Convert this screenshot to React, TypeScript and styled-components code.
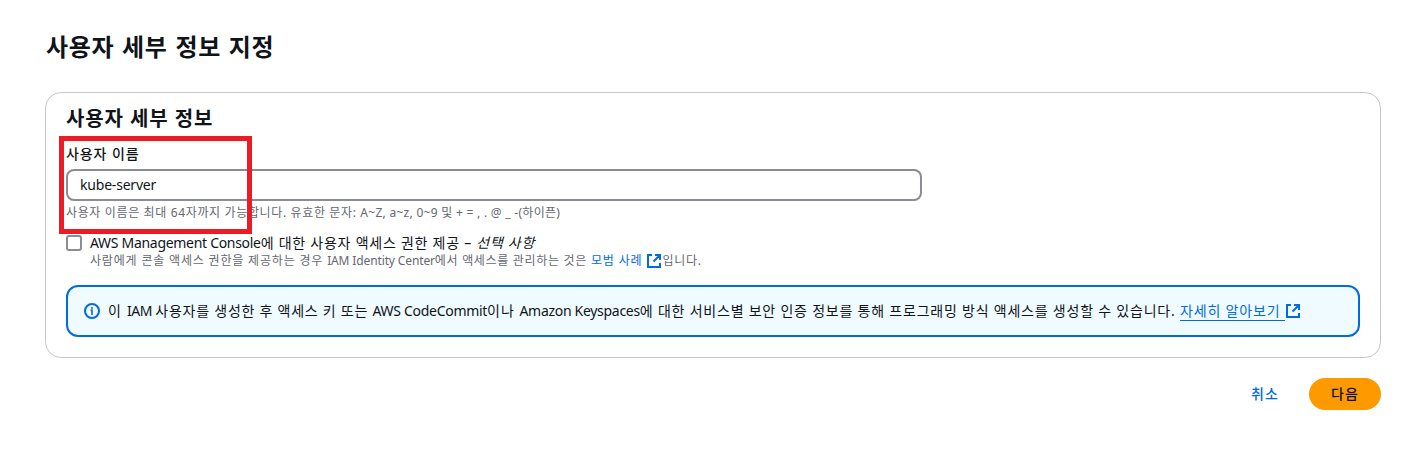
import React from "react";
import styled, { createGlobalStyle } from "styled-components";

const GlobalStyle = createGlobalStyle`
  *, *::before, *::after { box-sizing: border-box; }
  body {
    margin: 0;
    background: #fff;
    color: #0f141a;
    font-family: "Noto Sans", "Noto Sans CJK KR", sans-serif;
    font-size: 14px;
    line-height: 20px;
  }
`;

const Page = styled.main`
  width: 1410px;
  height: 470px;
  padding: 31px 29px 0 45px;
  overflow: hidden;
`;

const Title = styled.h1`
  margin: 0 0 29px 1px;
  font-size: 24px;
  line-height: 32px;
  font-weight: 700;
  white-space: nowrap;
  letter-spacing: 0.7px;
  word-spacing: 0.8px;
`;

const Card = styled.section`
  height: 266px;
  padding: 14px 20px 0;
  border: 1px solid #c6c6cd;
  border-radius: 16px;
`;

const CardTitle = styled.h2`
  margin: 0 0 13px;
  font-size: 20px;
  line-height: 24px;
  font-weight: 700;
  white-space: nowrap;
  letter-spacing: 0.9px;
`;

const Field = styled.div`
  position: relative;
  display: flex;
  flex-direction: column;
  width: 856px;
`;

const Label = styled.label`
  height: 20px;
  margin: 0 0 5px;
  font-weight: 500;
  letter-spacing: 0.9px;
`;

const TextInput = styled.input`
  height: 32px;
  padding: 0 12px 2px;
  border: 2px solid #8c8c94;
  border-radius: 8px;
  background: #fff;
  color: #0f141a;
  font: inherit;
  letter-spacing: -0.2px;
  outline: none;
`;

const Hint = styled.div`
  height: 16px;
  margin: 4px 0 0;
  color: #656871;
  font-size: 12px;
  line-height: 16px;
  white-space: nowrap;
`;

const Highlight = styled.div`
  position: absolute;
  left: -7px;
  top: -8px;
  width: 193px;
  height: 98px;
  border: 5px solid #ed1c24;
  pointer-events: none;
`;

const CheckRow = styled.div`
  display: flex;
  gap: 8px;
  margin-top: 12px;
`;

const Checkbox = styled.input`
  appearance: none;
  flex: none;
  width: 16px;
  height: 16px;
  margin: 2px 0 0;
  border: 2px solid #8c8c94;
  border-radius: 3px;
  background: #fff;
`;

const CheckText = styled.div`
  white-space: nowrap;
`;

const CheckDescription = styled.div`
  display: flex;
  color: #656871;
  font-size: 12px;
  line-height: 16px;
  white-space: pre;
`;

const Run = styled.span<{ $ls?: number; $ws?: number }>`
  letter-spacing: ${(p) => p.$ls ?? 0}px;
  word-spacing: ${(p) => p.$ws ?? 0}px;
`;

const Link = styled.a<{ $underlined?: boolean }>`
  color: #006ce0;
  white-space: pre;
  letter-spacing: 0.85px;
  text-decoration: none;
  border-bottom: ${(p) => (p.$underlined ? "1px solid #006ce0" : "0")};
`;

const InfoBox = styled.div`
  display: flex;
  align-items: center;
  height: 52px;
  margin-top: 16px;
  padding: 0 16px;
  border: 2px solid #006ce0;
  border-radius: 12px;
  background: #f0fbff;
`;

const InfoText = styled.div`
  display: flex;
  height: 20px;
  margin-left: 8px;
  white-space: pre;
`;

const Actions = styled.div`
  display: flex;
  justify-content: flex-end;
  gap: 8px;
  margin-top: 20px;
`;

const Button = styled.button<{ $primary?: boolean }>`
  height: 32px;
  padding: 0 22px 1px;
  border: 0;
  border-radius: 20px;
  background: ${(p) => (p.$primary ? "#ff9900" : "transparent")};
  color: ${(p) => (p.$primary ? "#0f141a" : "#006ce0")};
  font: inherit;
  font-weight: 500;
  letter-spacing: 1.1px;
`;

const Icon = styled.svg<{ $top?: number; $left?: number }>`
  flex: none;
  display: block;
  width: 16px;
  height: 16px;
  margin-top: ${(p) => p.$top ?? 0}px;
  margin-left: ${(p) => p.$left ?? 0}px;
  fill: none;
  stroke: #006ce0;
  stroke-width: 2;
`;

const ExternalIcon = ({ top, left }: { top?: number; left?: number }) => (
  <Icon viewBox="0 0 16 16" $top={top} $left={left} aria-hidden>
    <path d="M6 2H2v12h12v-4M9 2h5v5M14 2 7.5 8.5" />
  </Icon>
);

const InfoIcon = () => (
  <Icon viewBox="0 0 16 16" aria-hidden>
    <circle cx="8" cy="8" r="7" />
    <path d="M8 12V7H6.5M8 4v1.8" strokeWidth="1.6" />
  </Icon>
);

export default function App() {
  return (
    <>
      <GlobalStyle />
      <Page>
        <Title>사용자 세부 정보 지정</Title>
        <Card>
          <CardTitle>사용자 세부 정보</CardTitle>
          <Field>
            <Label htmlFor="username">사용자 이름</Label>
            <TextInput id="username" defaultValue="kube-server" spellCheck={false} />
            <Hint>
              <Run $ls={0.64}>사용자 이름은 최대 64자까지 가능합니다. 유효한 문자: </Run>
              <Run $ls={0.28}>A~Z, a~z, 0~9 및 + = , . @ _ -(하이픈)</Run>
            </Hint>
            <Highlight />
          </Field>
          <CheckRow>
            <Checkbox type="checkbox" id="console" />
            <div>
              <CheckText>
                <Run $ls={-0.3}>AWS Management Console</Run>
                <Run $ls={0.75}>에 대한 사용자 액세스 권한 제공 – </Run>
                <Run as="em" $ls={0.7}>선택 사항</Run>
              </CheckText>
              <CheckDescription>
                <Run $ls={0.82}>사람에게 콘솔 액세스 권한을 제공하는 경우 </Run>
                <Run $ls={-0.13}>IAM Identity Center</Run>
                <Run $ls={0.69}>에서 액세스를 관리하는 것은 </Run>
                <Link>모범 사례 </Link>
                <ExternalIcon />
                <Run $ls={0.75}>입니다.</Run>
              </CheckDescription>
            </div>
          </CheckRow>
          <InfoBox>
            <InfoIcon />
            <InfoText>
              <Run $ls={0.8} $ws={0.8}>이 </Run>
              <Run $ls={-0.4}>IAM </Run>
              <Run $ls={0.75}>사용자를 생성한 후 액세스 키 또는 </Run>
              <Run $ls={-0.3}>AWS CodeCommit</Run>
              <Run $ls={1}>이나 </Run>
              <Run $ls={-0.3}>Amazon Keyspaces</Run>
              <Run $ls={0.78}>에 대한 서비스별 보안 인증 정보를 통해 프로그래밍 방식 액세스를 생성할 수 있습니다. </Run>
              <Link $underlined>자세히 알아보기 </Link>
              <ExternalIcon top={2} />
            </InfoText>
          </InfoBox>
        </Card>
        <Actions>
          <Button type="button">취소</Button>
          <Button type="button" $primary>다음</Button>
        </Actions>
      </Page>
    </>
  );
}
